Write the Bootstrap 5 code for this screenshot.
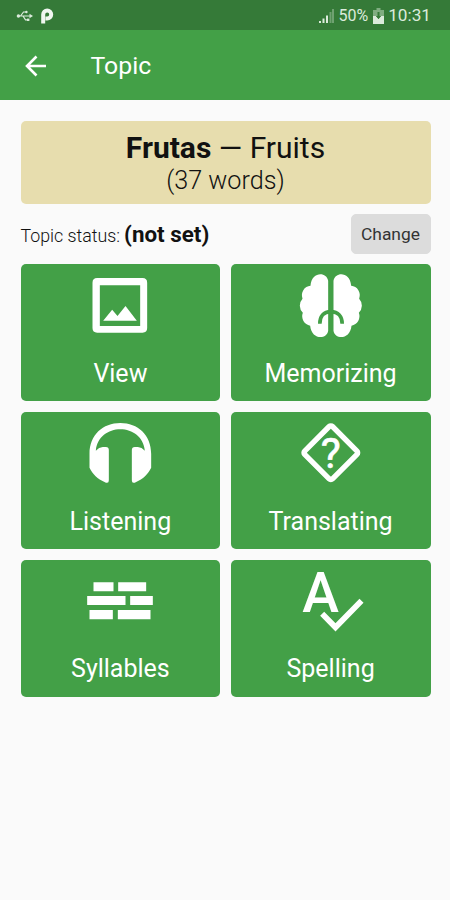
<!DOCTYPE html>
<html lang="en">
<head>
<meta charset="utf-8">
<meta name="viewport" content="width=device-width, initial-scale=1">
<title>Topic</title>
<link rel="stylesheet" href="https://cdn.jsdelivr.net/npm/bootstrap@5.3.0/dist/css/bootstrap.min.css">
<style>
body{font-family:Roboto,"Liberation Sans",sans-serif;background:#fafafa;color:#111;min-height:900px}
.status-bar{height:30px;background:#357a38;color:#dcebdc;padding:2px 19px 0 16px}
.charge{font-size:16px;margin:0 5px 0 3px}
.clock{font-size:17.2px;margin-left:4px}
.app-bar{height:70px;background:#43a047;color:#fff;padding:1px 24px 0}
.app-title{font-size:24.8px;line-height:30px;margin-left:42.5px;font-weight:400}
.screen{padding:20.5px 19.5px 0 20.5px}
.topic-card{background:#e7ddae;border-radius:5px;height:83.5px;padding-top:9px}
.topic-name{font-size:30px;line-height:36px}
.topic-count{font-size:25.2px;line-height:30px;font-weight:300}
.topic-state{height:40px;margin:10px 0 10.200px}
.state-text{padding-top:2px}
.state-label{font-size:17.8px;font-weight:300}
.state-value{font-size:22.4px}
.btn-change{--bs-btn-bg:#dcdcdc;--bs-btn-color:#333;--bs-btn-border-color:#dcdcdc;--bs-btn-padding-y:0;--bs-btn-padding-x:0;--bs-btn-font-size:17.4px;--bs-btn-border-radius:5px;width:80px;height:40px}
.tiles{display:grid;grid-template-columns:1fr 1fr;gap:10.4px}
.tile{--bs-btn-bg:#43a047;--bs-btn-color:#fff;--bs-btn-border-width:0;--bs-btn-padding-y:0;--bs-btn-padding-x:0;--bs-btn-border-radius:5px;--bs-btn-hover-bg:#388e3c;--bs-btn-hover-color:#fff;height:137.3px;padding-top:5.5px;font-size:25px;line-height:30px}
.tile svg{width:72px;height:72px;margin-bottom:17.3px;overflow:visible}
.tile svg text{font-family:Roboto,sans-serif;font-weight:500}
.tile svg .query{font-weight:400;stroke:#fff;stroke-width:2}
</style>
<script src="https://cdn.jsdelivr.net/npm/bootstrap@5.3.0/dist/js/bootstrap.bundle.min.js"></script>
</head>
<body>
<div class="status-bar d-flex align-items-center justify-content-between">
  <div class="d-flex align-items-center">
    <svg width="18" height="14" viewBox="0 0 18 14" fill="none" stroke="currentColor" stroke-width="1.2"><path d="M2 7h12M4.500 7l3-4H10M7 7l2.500 3.800H12"/><circle cx="2.400" cy="7" r="1.700" fill="currentColor" stroke="none"/><path d="M13.500 4.800 17 7l-3.500 2.200z" fill="currentColor" stroke="none"/><circle cx="10.400" cy="3" r="1.200" fill="currentColor" stroke="none"/><path d="M11 9.600h2.400V12H11z" fill="currentColor" stroke="none"/></svg>
    <svg class="ms-1" width="18" height="18" viewBox="0 0 18 18" fill="none" stroke="#f0f6f0" stroke-width="4"><path d="M5.200 16.500V7.500a4 4 0 1 1 4 4H7.500"/></svg>
  </div>
  <div class="d-flex align-items-center">
    <svg width="17" height="16" viewBox="0 0 17 16" fill="currentColor"><path d="M1 13h2v2H1zM4.500 10.500h2V15h-2zM8 7.500h2V15H8z"/><path d="M11.500 4h2v11h-2zM14 1h2v14h-2z" opacity=".35"/></svg>
    <span class="charge">50%</span>
    <svg width="11" height="16" viewBox="0 0 11 16" fill="currentColor"><path d="M3.500 0h4v2H11v6H0V2h3.500z" opacity=".45"/><path d="M0 8h3l2.500 3L8 8h3v8H0z"/><path d="M4.500 4h2v4H8L5.500 11 3 8h1.500z" fill="#357a38"/></svg>
    <span class="clock">10:31</span>
  </div>
</div>
<header class="app-bar d-flex align-items-center">
  <svg width="24" height="24" viewBox="0 0 24 24" fill="none" stroke="currentColor" stroke-width="2.600"><path d="M22 12H3.500M12.500 2.500 3 12l9.500 9.500"/></svg>
  <h1 class="app-title mb-0">Topic</h1>
</header>
<main class="screen">
  <section class="topic-card text-center">
    <div class="topic-name"><b>Frutas</b> — Fruits</div>
    <div class="topic-count">(37 words)</div>
  </section>
  <div class="topic-state d-flex align-items-center justify-content-between">
    <div class="state-text"><span class="state-label">Topic status:</span> <b class="state-value">(not set)</b></div>
    <button class="btn btn-change" type="button">Change</button>
  </div>
  <div class="tiles">
    <button class="btn tile d-flex flex-column align-items-center" type="button">
      <svg viewBox="223.500 30 216 216" fill="#fff"><path fill-rule="evenodd" d="M263 54H399Q413 54 413 68V204Q413 218 399 218H263Q249 218 249 204V68Q249 54 263 54ZM271 76V198H392V76Z"/><path d="M281 182 308 149 324 168 348 138 382 182Z"/></svg>
      View
    </button>
    <button class="btn tile d-flex flex-column align-items-center" type="button">
      <svg viewBox="208.500 30 216 216"><g fill="#fff"><path id="lobe" d="M308 62V212C304 239 258 240 254 197A29 29 0 0 1 232 158A30 30 0 0 1 231 116A29 29 0 0 1 255 77C258 34 303 34 308 62Z"/><use href="#lobe" transform="matrix(-1 0 0 1 632 0)"/></g><path d="M283 191C283 170 294 155 316 155S350 170 350 191" fill="none" stroke="#43a047" stroke-width="11"/></svg>
      Memorizing
    </button>
    <button class="btn tile d-flex flex-column align-items-center" type="button">
      <svg viewBox="223.500 38 216 216" fill="#fff"><path d="M240 148C240 92 280 56 332.500 56S425 92 425 148V190C416 209 400 224 380 233Q367 240 367 228V137Q367 128 376 128H385Q397 129 406 139C402 98 369 75 332.500 75S263 98 259 139Q268 129 280 128H289Q298 128 298 137V228Q298 240 285 233C265 224 249 209 240 190Z"/></svg>
      Listening
    </button>
    <button class="btn tile d-flex flex-column align-items-center" type="button">
      <svg viewBox="208.500 38 216 216"><rect x="257" y="86" width="118" height="118" rx="7" transform="rotate(45 316 145)" fill="none" stroke="#fff" stroke-width="16"/><text class="query" x="316" y="190" font-size="127" text-anchor="middle" fill="#fff">?</text></svg>
      Translating
    </button>
    <button class="btn tile d-flex flex-column align-items-center" type="button">
      <svg viewBox="223.500 45 216 216" fill="#fff"><path d="M252 97H312V124H252ZM326 97H410V124H326ZM233 138H348V165H233ZM362 138H430V165H362ZM240 180H310V208H240ZM325 180H423V208H325Z"/></svg>
      Syllables
    </button>
    <button class="btn tile d-flex flex-column align-items-center" type="button">
      <svg viewBox="208.500 45 216 216"><text x="285.500" y="186" font-size="166" text-anchor="middle" fill="#fff">A</text><path d="M290 191 330 232 408 152" fill="none" stroke="#fff" stroke-width="17"/></svg>
      Spelling
    </button>
  </div>
</main>
</body>
</html>
